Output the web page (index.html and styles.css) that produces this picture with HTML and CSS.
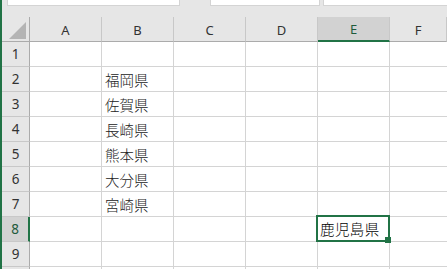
FILE: index.html
```html
<!DOCTYPE html>
<html lang="ja">
<head>
    <meta charset="UTF-8">
    <title>Sheet1</title>
    <link rel="stylesheet" href="styles.css">
</head>
<body>
    <div class="app">
        <!-- Поля над сеткой -->
        <div class="topbar">
            <div class="box box-name"></div>
            <div class="box box-mid"></div>
            <div class="box box-formula"></div>
        </div>

        <!-- Сетка листа -->
        <div class="grid">
            <div class="corner">
                <svg width="18" height="17" viewBox="0 0 18 17"><polygon points="17,0 17,17 0,17" fill="#b4b4b4"/></svg>
            </div>
            <div class="colhead">A</div>
            <div class="colhead">B</div>
            <div class="colhead">C</div>
            <div class="colhead">D</div>
            <div class="colhead active">E</div>
            <div class="colhead last">F</div>

            <div class="rowhead">1</div>
            <div class="cell"></div><div class="cell"></div><div class="cell"></div><div class="cell"></div><div class="cell"></div><div class="cell last"></div>

            <div class="rowhead">2</div>
            <div class="cell"></div><div class="cell">福岡県</div><div class="cell"></div><div class="cell"></div><div class="cell"></div><div class="cell last"></div>

            <div class="rowhead">3</div>
            <div class="cell"></div><div class="cell">佐賀県</div><div class="cell"></div><div class="cell"></div><div class="cell"></div><div class="cell last"></div>

            <div class="rowhead">4</div>
            <div class="cell"></div><div class="cell">長崎県</div><div class="cell"></div><div class="cell"></div><div class="cell"></div><div class="cell last"></div>

            <div class="rowhead">5</div>
            <div class="cell"></div><div class="cell">熊本県</div><div class="cell"></div><div class="cell"></div><div class="cell"></div><div class="cell last"></div>

            <div class="rowhead">6</div>
            <div class="cell"></div><div class="cell">大分県</div><div class="cell"></div><div class="cell"></div><div class="cell"></div><div class="cell last"></div>

            <div class="rowhead">7</div>
            <div class="cell"></div><div class="cell">宮崎県</div><div class="cell"></div><div class="cell"></div><div class="cell"></div><div class="cell last"></div>

            <div class="rowhead active">8</div>
            <div class="cell"></div><div class="cell"></div><div class="cell"></div><div class="cell"></div>
            <div class="cell selected">鹿児島県<span class="sel-border"></span><span class="fill-handle"></span></div>
            <div class="cell last"></div>

            <div class="rowhead">9</div>
            <div class="cell"></div><div class="cell"></div><div class="cell"></div><div class="cell"></div><div class="cell"></div><div class="cell last"></div>

            <div class="rowhead"></div>
            <div class="cell"></div><div class="cell"></div><div class="cell"></div><div class="cell"></div><div class="cell"></div><div class="cell last"></div>
        </div>
    </div>
</body>
</html>
```

FILE: styles.css
```css
html, body {
    margin: 0;
    padding: 0;
    overflow: hidden;
    background: #ffffff;
}
.app {
    width: 447px;
    height: 269px;
    overflow: hidden;
    border-left: 2px solid #217346;
    box-sizing: border-box;
    font-family: "Noto Sans", "Noto Sans CJK JP", sans-serif;
}
.topbar {
    height: 17px;
    background: #e6e6e6;
    display: flex;
    align-items: flex-start;
}
.box {
    height: 6px;
    background: #ffffff;
    border: 1px solid #d4d4d4;
    border-top: none;
    box-sizing: border-box;
}
.box-name {
    margin-left: 5px;
    width: 173px;
}
.box-mid {
    margin-left: 30px;
    width: 110px;
}
.box-formula {
    margin-left: 3px;
    flex: 1;
    border-right: none;
}
.grid {
    display: grid;
    grid-template-columns: 28px repeat(5, 72px) 57px;
    grid-template-rows: repeat(11, 25px);
}
.corner {
    background: #e6e6e6;
    border-right: 1px solid #ababab;
    border-bottom: 1px solid #ababab;
    display: flex;
    align-items: flex-end;
    justify-content: flex-end;
    padding: 0 2px 2px 0;
}
.corner svg {
    display: block;
}
.colhead {
    background: #e6e6e6;
    border-right: 1px solid #c8c8c8;
    border-bottom: 1px solid #ababab;
    display: flex;
    align-items: center;
    justify-content: center;
    font-size: 13px;
    color: #333;
    padding-top: 1px;
}
.colhead.active {
    background: #d2d2d2;
    border-bottom: 2px solid #217346;
    color: #1e5b3c;
}
.rowhead {
    background: #e6e6e6;
    border-right: 1px solid #ababab;
    border-bottom: 1px solid #c8c8c8;
    display: flex;
    align-items: center;
    justify-content: center;
    font-size: 13.5px;
    color: #333;
}
.rowhead.active {
    background: #d2d2d2;
    border-right: 2px solid #217346;
    color: #1e5b3c;
}
.cell {
    border-right: 1px solid #d4d4d4;
    border-bottom: 1px solid #d4d4d4;
    display: flex;
    align-items: center;
    padding-left: 3px;
    font-family: "Noto Sans CJK JP", sans-serif;
    font-weight: 300;
    font-size: 14.5px;
    color: #222;
    white-space: nowrap;
}
.cell.last {
    border-right: none;
}
.cell.selected {
    position: relative;
    color: #000;
    padding-left: 2px;
    padding-bottom: 2px;
    letter-spacing: 0.4px;
}
.sel-border {
    position: absolute;
    left: -2px;
    top: -2px;
    right: -1px;
    bottom: -1px;
    border: 2px solid #217346;
}
.fill-handle {
    position: absolute;
    right: -2px;
    bottom: -2px;
    width: 6px;
    height: 6px;
    background: #217346;
}
```
